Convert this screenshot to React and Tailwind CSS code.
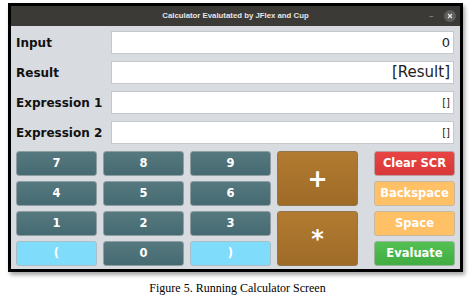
import React from "react";

const digit =
  "bg-gradient-to-b from-[#55797f] to-[#466a71] border border-[#8f9ea3] text-white";
const cyan = "bg-[#7fdcfb] border border-[#a9bfc7] text-white";
const brown =
  "bg-gradient-to-b from-[#b27b31] to-[#9e6b27] border border-[#8e7650] text-white";

function Key({ label, tone, className = "" }) {
  return (
    <button
      className={`flex items-center justify-center rounded-[3px] font-bold text-[11.5px] [font-family:'DejaVu_Sans',sans-serif] ${tone} ${className}`}
    >
      {label}
    </button>
  );
}

function Row({ label, value, size }) {
  return (
    <div className="flex items-center h-[23px]">
      <div className="w-[95px] font-bold text-[12px] text-[#111] [font-family:'DejaVu_Sans',sans-serif]">
        {label}
      </div>
      <div
        className={`flex-1 h-full bg-white border border-[#c4c7cc] flex items-center justify-end pr-[3px] text-[#222] [font-family:'DejaVu_Sans',sans-serif] ${size}`}
      >
        {value}
      </div>
    </div>
  );
}

export default function App() {
  return (
    <div className="w-[475px] h-[298px] bg-white relative">
      <div className="pt-[3px] pl-[8px]">
        <div className="w-[455px] h-[269px] border-[3px] border-black bg-[#d8dbe0] shadow-[2px_3px_4px_rgba(0,0,0,0.35)] flex flex-col">
          <div className="h-[20px] bg-[#3b3a37] flex items-center relative">
            <div className="flex-1 text-center text-[#e6e6e6] font-bold text-[7.8px] [font-family:'Liberation_Sans',sans-serif]">
              Calculator Evalutated by JFlex and Cup
            </div>
            <span className="absolute left-[418px] top-[4px] text-[#9a9a9a] text-[9px] [font-family:'DejaVu_Sans',sans-serif]">
              –
            </span>
            <span className="absolute left-[433px] top-[4px] w-[12px] h-[12px] rounded-full bg-[#5d5d5b] flex items-center justify-center">
              <svg width="6" height="6" viewBox="0 0 6 6">
                <path d="M1 1L5 5M5 1L1 5" stroke="#e8e8e8" strokeWidth="1.3" />
              </svg>
            </span>
          </div>
          <div className="flex flex-col gap-[7px] pl-[5px] pr-[6px] pt-[5px]">
            <Row label="Input" value="0" size="text-[13px]" />
            <Row label="Result" value="[Result]" size="text-[15px]" />
            <Row label="Expression 1" value="[]" size="text-[10px]" />
            <Row label="Expression 2" value="[]" size="text-[10px]" />
          </div>
          <div className="flex pl-[5px] pt-[7px]">
            <div className="grid grid-cols-[81px_81px_81px_81px] grid-rows-[25px_25px_25px_25px] gap-x-[6px] gap-y-[5px]">
              <Key label="7" tone={digit} />
              <Key label="8" tone={digit} />
              <Key label="9" tone={digit} />
              <Key
                label="+"
                tone={brown}
                className="row-span-2 text-[24px] font-bold"
              />
              <Key label="4" tone={digit} />
              <Key label="5" tone={digit} />
              <Key label="6" tone={digit} />
              <Key label="1" tone={digit} />
              <Key label="2" tone={digit} />
              <Key label="3" tone={digit} />
              <Key
                label="*"
                tone={brown}
                className="row-span-2 text-[24px] font-bold"
              />
              <Key label="(" tone={cyan} />
              <Key label="0" tone={digit} />
              <Key label=")" tone={cyan} />
            </div>
            <div className="ml-[16px] grid grid-cols-[81px] grid-rows-[25px_25px_25px_25px] gap-y-[5px]">
              <Key label="Clear SCR" tone="bg-gradient-to-b from-[#e84444] to-[#d93838] border border-[#b9a0a0] text-white" />
              <Key label="Backspace" tone="bg-[#ffc066] border border-[#c8b8a0] text-white" />
              <Key label="Space" tone="bg-[#ffc066] border border-[#c8b8a0] text-white" />
              <Key label="Evaluate" tone="bg-gradient-to-b from-[#52c152] to-[#42ad42] border border-[#9ab59a] text-white" />
            </div>
          </div>
        </div>
      </div>
      <div className="absolute left-0 right-0 top-[279px] text-center text-[12px] text-black [font-family:'Liberation_Serif',serif]">
        Figure 5. Running Calculator Screen
      </div>
    </div>
  );
}
